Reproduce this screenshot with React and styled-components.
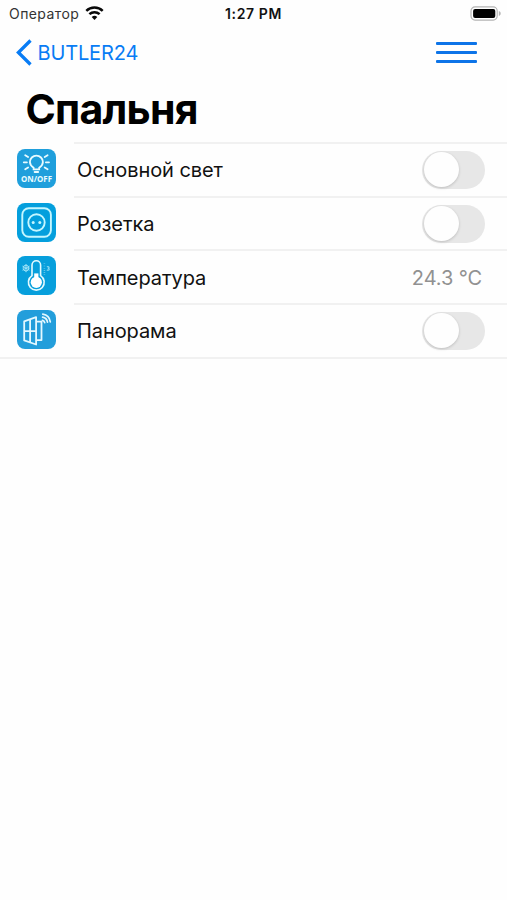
import React, { useState } from 'react'
import styled, { createGlobalStyle } from 'styled-components'

const BulbIcon = () => (
  <svg viewBox='0 0 39 39' fill='none' stroke='#e9fbff' strokeWidth='1.8' strokeLinecap='round'>
    <path d='M16.6 20.3v-1.6c-2.4-1.6-3.7-3.2-3.7-5.6a6.5 6.5 0 0 1 13 0c0 2.4-1.3 4-3.7 5.6v1.6z' />
    <path d='M17.6 23h3.6' />
    <path d='M6.8 13.3h3.1M28.9 13.3h3.1M8.2 6.3l2.9 1.8M30.6 6.3l-2.9 1.8M8.2 20.3l2.9-1.8M30.6 20.3l-2.9-1.8' />
    <text
      x='19.5'
      y='32.8'
      textAnchor='middle'
      textLength='31'
      lengthAdjust='spacingAndGlyphs'
      fill='#e9fbff'
      stroke='none'
      fontFamily='"Noto Sans", sans-serif'
      fontWeight='700'
      fontSize='8'
    >
      ON/OFF
    </text>
  </svg>
)

const SocketIcon = () => (
  <svg viewBox='0 0 39 39' fill='none' stroke='#c4f6ff' strokeWidth='1.9'>
    <rect x='5.3' y='5.2' width='28.6' height='28.6' rx='6.5' />
    <circle cx='19.5' cy='19.5' r='8.2' />
    <circle cx='16.2' cy='19.5' r='1.5' fill='#c4f6ff' stroke='none' />
    <circle cx='22.8' cy='19.5' r='1.5' fill='#c4f6ff' stroke='none' />
  </svg>
)

const ThermometerIcon = () => (
  <svg viewBox='0 0 39 39' fill='none' stroke='#e4faff' strokeWidth='1.6' strokeLinecap='round'>
    <path d='M15 19.6V9a4.3 4.3 0 0 1 8.6 0v10.6a7.9 7.9 0 1 1-8.6 0z' />
    <circle cx='19.3' cy='26.3' r='5.6' fill='#fff' stroke='none' />
    <path d='M19.3 26v-8.6' stroke='#fff' strokeWidth='4.2' strokeLinecap='butt' />
    <g stroke='#9be2f7' strokeWidth='1'>
      <path d='M9 8.4v7.4M5.8 10.3l6.4 3.7M12.2 10.3L5.8 14' />
      <circle cx='9' cy='12.1' r='2.9' />
    </g>
    <path d='M27.4 7.5v11.5' stroke='#7dd2ef' strokeWidth='1.6' strokeDasharray='0.6 1.6' strokeLinecap='butt' />
    <path d='M30.2 10.7c2.4-.6 2.4 1.5.6 1.6 2 0 2 2.3-.6 1.8' stroke='#8fdaf2' strokeWidth='1.1' />
  </svg>
)

const WindowIcon = () => (
  <svg viewBox='0 0 39 39' fill='none' stroke='#e4f8ff' strokeWidth='1.8' strokeLinejoin='round'>
    <path d='M7.2 11.4l11.9-4.3v27.4L7.2 30.4z' />
    <path d='M13.1 9.3v23M7.2 21.2h11.9' />
    <path d='M19.1 11.6h5.4v18.5h-5.4' />
    <g strokeLinecap='round' strokeWidth='1.7'>
      <path d='M25.4 10.3a3 3 0 0 1 2.3 2.3' />
      <path d='M25.6 7.2a6 6 0 0 1 4.9 5' />
      <path d='M25.8 4.2a9 9 0 0 1 7.5 7.7' />
    </g>
  </svg>
)

const WifiIcon = () => (
  <svg width='19' height='15' viewBox='0 0 19 15' fill='none' stroke='#080808' strokeWidth='2.5'>
    <path d='M1.3 4.9a11.8 11.8 0 0 1 16.4 0' />
    <path d='M4.4 8.2a7.4 7.4 0 0 1 10.2 0' />
    <path d='M9.5 14l-2.8-2.9a4 4 0 0 1 5.6 0z' fill='#080808' stroke='none' />
  </svg>
)

const BatteryIcon = () => (
  <svg width='31' height='15' viewBox='0 0 31 15'>
    <rect x='1' y='0.9' width='26.2' height='13.2' rx='4' fill='#fff' stroke='#b4b4b4' strokeWidth='1.2' />
    <rect x='3.1' y='3' width='22.2' height='9' rx='2' fill='#000' />
    <path d='M28.8 5.1c1.5.6 1.9 1.4 1.9 2.4s-.4 1.8-1.9 2.4z' fill='#b4b4b4' />
  </svg>
)

const devices = [
  { id: 1, name: 'Основной свет', icon: <BulbIcon />, color: '#1f9fdc' },
  { id: 2, name: 'Розетка', icon: <SocketIcon />, color: '#049fdd' },
  { id: 3, name: 'Температура', icon: <ThermometerIcon />, color: '#079fdc', value: '24.3 °C' },
  { id: 4, name: 'Панорама', icon: <WindowIcon />, color: '#239edb' }
]

const App = () => {
  const [active, setActive] = useState({})

  const toggle = id => {
    setActive({ ...active, [id]: !active[id] })
  }

  return (
    <Screen>
      <GlobalStyle />
      <StatusBar>
        <Carrier>
          <span>Оператор</span>
          <WifiIcon />
        </Carrier>
        <Clock>1:27 PM</Clock>
        <Battery>
          <BatteryIcon />
        </Battery>
      </StatusBar>
      <NavBar>
        <BackButton>
          <svg width='16' height='27' viewBox='0 0 16 27' fill='none' stroke='#087cf5' strokeWidth='3.3'>
            <path d='M14.5 1.5L2.4 13.5l12.1 12' />
          </svg>
          <span>BUTLER24</span>
        </BackButton>
        <MenuButton aria-label='Меню'>
          <i />
          <i />
          <i />
        </MenuButton>
      </NavBar>
      <Title>Спальня</Title>
      <List>
        {devices.map(device => (
          <Row key={device.id}>
            <IconTile $color={device.color}>{device.icon}</IconTile>
            <RowContent>
              <Name>{device.name}</Name>
              {device.value ? (
                <Value>{device.value}</Value>
              ) : (
                <Switch
                  role='switch'
                  aria-checked={!!active[device.id]}
                  aria-label={device.name}
                  $on={active[device.id]}
                  onClick={() => toggle(device.id)}
                />
              )}
            </RowContent>
          </Row>
        ))}
      </List>
    </Screen>
  )
}

export default App

const GlobalStyle = createGlobalStyle`
  body {
    margin: 0;
    background: #fefefe;
  }
  * {
    box-sizing: border-box;
  }
  button {
    border: none;
    background: none;
    padding: 0;
    font: inherit;
    cursor: pointer;
  }
`

const Screen = styled.div`
  min-height: 900px;
  background: #fefefe;
  color: #111;
  font-family: Inter, 'Liberation Sans', sans-serif;
`

const StatusBar = styled.div`
  display: grid;
  grid-template-columns: 1fr auto 1fr;
  align-items: center;
  height: 27px;
  padding: 0 6px 0 9px;
`

const Carrier = styled.div`
  display: flex;
  align-items: center;
  gap: 6px;
  color: #333;
  font-size: 14px;
  letter-spacing: 0.42px;
  svg {
    margin-top: -1px;
  }
`

const Clock = styled.div`
  margin-left: -3px;
  color: #111;
  font-size: 14px;
  font-weight: 600;
  letter-spacing: 0.6px;
`

const Battery = styled.div`
  display: flex;
  justify-content: flex-end;
`

const NavBar = styled.div`
  display: flex;
  align-items: center;
  justify-content: space-between;
  height: 50px;
  padding: 0 30px 0 16px;
`

const BackButton = styled.button`
  display: flex;
  align-items: center;
  gap: 5.5px;
  color: #087cf5;
  font-size: 20px !important;
  letter-spacing: -0.15px;
  span {
    padding-top: 1px;
  }
`

const MenuButton = styled.button`
  display: flex;
  flex-direction: column;
  gap: 6px;
  width: 41px;
  i {
    height: 3px;
    border-radius: 1px;
    background: #0d74e8;
  }
`

const Title = styled.h1`
  height: 65px;
  margin: 0;
  padding-left: 25.5px;
  color: #000;
  font-size: 41px;
  font-weight: 700;
  line-height: 65px;
  letter-spacing: -0.75px;
`

const List = styled.div`
  border-bottom: 2px solid #f1f1f1;
`

const Row = styled.div`
  display: flex;
  align-items: center;
  height: 53.7px;
  padding-left: 17px;
`

const IconTile = styled.div`
  flex: none;
  width: 39px;
  height: 39px;
  margin-bottom: 1px;
  border-radius: 8px;
  background: ${props => props.$color};
  svg {
    display: block;
  }
`

const RowContent = styled.div`
  display: flex;
  flex: 1;
  align-items: center;
  justify-content: space-between;
  height: 100%;
  margin-left: 18px;
  padding: 0 22px 0 3px;
  border-top: 2px solid #f1f1f1;
`

const Name = styled.span`
  padding-top: 1px;
  font-size: 20px;
  letter-spacing: -0.08px;
`

const Value = styled.span`
  margin-right: 3px;
  padding-top: 1px;
  color: #919191;
  font-size: 20px;
  letter-spacing: -0.1px;
`

const Switch = styled.button`
  width: 63px;
  height: 38px;
  padding: 1px;
  border-radius: 19px;
  background: ${props => (props.$on ? '#34c759' : '#e7e7e7')};
  &::before {
    content: '';
    display: block;
    width: 35px;
    height: 35px;
    margin-left: ${props => (props.$on ? '25px' : '1px')};
    border-radius: 50%;
    background: #fefefe;
    box-shadow: 0 1px 3px rgba(0, 0, 0, 0.18);
  }
`
